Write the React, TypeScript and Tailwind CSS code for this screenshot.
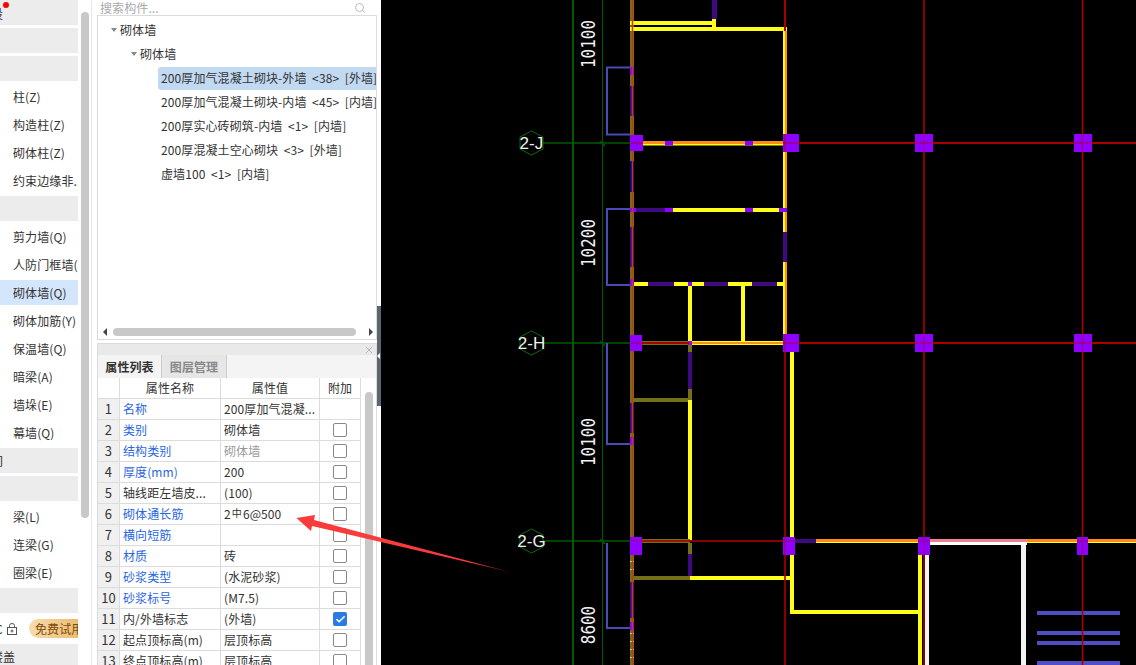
import { Check, Search, X } from 'lucide-react'

const FONT = "font-['Noto_Sans_CJK_SC','Noto_Sans',sans-serif]"

const sideRows: { label?: string; head?: boolean; active?: boolean }[] = [
  { head: true },
  { head: true },
  { label: '柱(Z)' },
  { label: '构造柱(Z)' },
  { label: '砌体柱(Z)' },
  { label: '约束边缘非...' },
  { head: true },
  { label: '剪力墙(Q)' },
  { label: '人防门框墙(' },
  { label: '砌体墙(Q)', active: true },
  { label: '砌体加筋(Y)' },
  { label: '保温墙(Q)' },
  { label: '暗梁(A)' },
  { label: '墙垛(E)' },
  { label: '幕墙(Q)' },
]

const treeRows = [
  '200厚加气混凝土砌块-外墙  <38>  [外墙]',
  '200厚加气混凝土砌块-内墙  <45>  [内墙]',
  '200厚实心砖砌筑-内墙  <1>  [内墙]',
  '200厚混凝土空心砌块  <3>  [外墙]',
  '虚墙100  <1>  [内墙]',
]

const props: { name: string; value: string; link?: boolean; muted?: boolean; box?: boolean; on?: boolean }[] = [
  { name: '名称', value: '200厚加气混凝...', link: true, box: false },
  { name: '类别', value: '砌体墙', link: true },
  { name: '结构类别', value: '砌体墙', link: true, muted: true },
  { name: '厚度(mm)', value: '200', link: true },
  { name: '轴线距左墙皮...', value: '(100)' },
  { name: '砌体通长筋', value: 'bar', link: true },
  { name: '横向短筋', value: '', link: true },
  { name: '材质', value: '砖', link: true },
  { name: '砂浆类型', value: '(水泥砂浆)', link: true },
  { name: '砂浆标号', value: '(M7.5)', link: true },
  { name: '内/外墙标志', value: '(外墙)', on: true },
  { name: '起点顶标高(m)', value: '层顶标高' },
  { name: '终点顶标高(m)', value: '层顶标高' },
]

const YELLOW = '#ffff1a'
const ORANGE = '#ff8c14'
const OLIVE = '#74701a'
const BRIGHT = '#8f00ff'
const DARK = '#3f0a80'
const RED = '#a80000'
const BLUE = '#4a4ab8'
const GREEN = '#005a00'

// x, y, w, h, fill
const rects: [number, number, number, number, string][] = [
  // left column
  [630, 0, 4, 665, OLIVE],
  // top walls
  [630, 21, 85, 4, YELLOW],
  [630, 27, 157, 4, YELLOW],
  [712, 19, 4, 10, YELLOW],
  [712, 0, 5, 19, DARK],
  // right wall upper
  [783, 27, 4, 310, YELLOW],
  [785, 31, 2, 305, ORANGE],
  [783, 232, 4, 30, DARK],
  // column openings
  [630, 67, 4, 8, BRIGHT],
  [630, 86, 4, 30, DARK],
  [630, 161, 4, 31, '#100080'],
  [630, 227, 4, 40, DARK],
  [630, 279, 4, 7, BRIGHT],
  [630, 403, 4, 30, DARK],
  [630, 437, 4, 8, BRIGHT],
  [630, 582, 4, 36, DARK],
  [630, 622, 4, 8, BRIGHT],
  // axis J wall
  [643, 141, 140, 4.5, YELLOW],
  [643, 141, 140, 3, ORANGE],
  [665, 141, 8, 4.5, BRIGHT],
  [745, 141, 8, 4.5, BRIGHT],
  // y 210 wall
  [630, 208, 156, 4, YELLOW],
  [630, 208, 6, 4, BRIGHT],
  [636, 208, 29, 4, DARK],
  [665, 208, 8, 4, BRIGHT],
  [745, 208, 8, 4, BRIGHT],
  [779, 208, 8, 4, BRIGHT],
  // y 284 wall
  [630, 282, 153, 4, YELLOW],
  [630, 282, 4, 4, BRIGHT],
  [648, 282, 26, 4, DARK],
  [688, 282, 4, 4, BRIGHT],
  [704, 282, 24, 4, DARK],
  [752, 282, 25, 4, DARK],
  // inner verticals
  [688, 286, 4, 55, YELLOW],
  [741, 286, 4, 55, YELLOW],
  // axis H wall
  [642, 341, 47, 4, OLIVE],
  [692, 341, 91, 4, YELLOW],
  [692, 342, 91, 2, ORANGE],
  [688, 341, 4, 4, BRIGHT],
  [688, 345, 4, 55, OLIVE],
  [688, 352, 4, 37, DARK],
  [634, 398, 56, 4, OLIVE],
  [688, 400, 4, 140, YELLOW],
  // axis G wall
  [642, 539, 48, 4, OLIVE],
  [688, 543, 4, 33, OLIVE],
  [688, 554, 4, 22, DARK],
  [630, 576, 60, 4, OLIVE],
  [690, 576, 102, 4, YELLOW],
  [790, 352, 4, 262, YELLOW],
  [790, 610, 130, 4, YELLOW],
  [918, 555, 4, 110, YELLOW],
  [795, 539, 21, 4, DARK],
  [816, 539, 102, 4, YELLOW],
  [816, 539, 102, 3, ORANGE],
  [1027, 539, 109, 4, YELLOW],
  [1027, 539, 109, 3, ORANGE],
  // white wall
  [930, 539, 97, 3, '#f08090'],
  [930, 542, 97, 3, '#ffffff'],
  [925, 555, 4, 110, '#f4f4f4'],
  [1021, 545, 5, 120, '#f4f4f4'],
  // blue bars
  [1037, 611, 83, 4, '#4f4fc4'],
  [1037, 631, 83, 4, '#4f4fc4'],
  [1037, 641, 83, 4, '#4f4fc4'],
  [1037, 661, 83, 4, '#4f4fc4'],
]

const squares: [number, number, number, number][] = [
  [630, 135, 13, 16],
  [783, 134, 16, 18],
  [915, 134, 18, 18],
  [1074, 134, 18, 18],
  [630, 335, 12, 16],
  [783, 334, 16, 18],
  [915, 334, 18, 18],
  [1074, 334, 18, 18],
  [630, 537, 12, 18],
  [783, 537, 12, 18],
  [918, 537, 12, 18],
  [1077, 537, 11, 18],
]

const bubbles = [
  { y: 143, label: '2-J' },
  { y: 343, label: '2-H' },
  { y: 541, label: '2-G' },
]

const dims = [
  { y: 44, label: '10100' },
  { y: 243, label: '10200' },
  { y: 442, label: '10100' },
  { y: 625, label: '8600' },
]

function Axes({ opacity = 1 }: { opacity?: number }) {
  return (
    <g stroke={RED} strokeWidth="2" strokeOpacity={opacity}>
      <path d="M631 143H643M783 143H1136" />
      <path d="M631 343H689M783 343H1136" />
      <path d="M631 541H795M918 541H930M1077 541H1088" strokeWidth="1.5" />
      <path d="M785 0V31" />
      <path d="M785 134V152" />
      <path d="M785 334V665" strokeWidth="1.5" />
      <path d="M924 0V665" strokeWidth="1.5" />
      <path d="M1082.5 0V665" strokeWidth="1.5" />
    </g>
  )
}

function Canvas() {
  return (
    <svg viewBox="381 0 755 665" className="h-full w-full block">
      <rect x="381" y="0" width="755" height="665" fill="#000" />
      {/* grid, green side */}
      <rect x="572" y="0" width="2" height="665" fill={GREEN} />
      <rect x="602" y="0" width="1" height="665" fill={GREEN} />
      {bubbles.map((b) => (
        <g key={b.y}>
          <path d={`M543 ${b.y}H630`} stroke={GREEN} strokeWidth="1.5" />
          <path d={`M600 ${b.y - 2}L605 ${b.y + 3}`} stroke={GREEN} strokeWidth="1.5" />
          <polygon
            points={`531.5,${b.y - 12} 543,${b.y - 6} 543,${b.y + 6} 531.5,${b.y + 12} 520,${b.y + 6} 520,${b.y - 6}`}
            fill="none"
            stroke="#0a6a0a"
          />
          <text
            x="531.5"
            y={b.y + 6}
            textAnchor="middle"
            fill="#f0f0f0"
            fontSize="17"
            fontFamily="'Liberation Sans', sans-serif"
          >
            {b.label}
          </text>
        </g>
      ))}
      {dims.map((d) => (
        <text
          key={d.y}
          transform={`translate(595 ${d.y}) rotate(-90)`}
          textAnchor="middle"
          fill="#f0f0f0"
          fontSize="19"
          fontFamily="'DejaVu Sans Mono', monospace"
          textLength={d.label.length * 9.6}
          lengthAdjust="spacingAndGlyphs"
        >
          {d.label}
        </text>
      ))}
      {/* brackets */}
      <g fill="none" stroke={BLUE} strokeWidth="2">
        <path d="M630 67.5H607V134.5H630" />
        <path d="M630 209H607V285H630" />
        <path d="M607 343V444H630" />
        <path d="M607 543V628H630" />
      </g>
      {rects.map(([x, y, w, h, fill], i) => (
        <rect key={i} x={x} y={y} width={w} height={h} fill={fill} />
      ))}
      {[561, 569, 633, 641, 649, 657].map((y) => (
        <rect key={y} x="630" y={y} width="4" height="1" fill="#d8d8d8" />
      ))}
      <Axes />
      <path d="M632.5 0V665" stroke="#c23a10" strokeWidth="1.5" />
      {squares.map(([x, y, w, h], i) => (
        <rect key={i} x={x} y={y} width={w} height={h} fill={BRIGHT} />
      ))}
      {/* axes show faintly through the columns */}
      <Axes opacity={0.4} />
    </svg>
  )
}

function SideRow({ label, head, active }: { label?: string; head?: boolean; active?: boolean }) {
  return (
    <div
      className={`h-[25px] shrink-0 flex items-center pl-[13px] whitespace-nowrap overflow-hidden ${
        head ? 'bg-[#ececec]' : active ? 'bg-[#d3e6fb]' : ''
      }`}
    >
      {label}
    </div>
  )
}

function Sidebar() {
  return (
    <div className="w-[78px] shrink-0 flex flex-col gap-[3px] overflow-hidden relative text-[12px] text-[#333]">
      <div className="h-[25px] shrink-0 bg-[#ececec] flex items-center overflow-hidden pt-[3px]">
        <span className="-ml-[9px]">设</span>
      </div>
      <span className="absolute left-[3px] top-[2px] w-[6px] h-[6px] rounded-full bg-[#ff0000]" />
      {sideRows.map((r, i) => (
        <SideRow key={i} {...r} />
      ))}
      <div className="h-[25px] shrink-0 bg-[#ececec] flex items-center overflow-hidden">
        <span className="-ml-[9px]">间</span>
      </div>
      <SideRow head />
      <SideRow label="梁(L)" />
      <SideRow label="连梁(G)" />
      <SideRow label="圈梁(E)" />
      <SideRow head />
      <div className="h-[25px] shrink-0 flex items-center overflow-hidden">
        <span className="-ml-[5px] w-[8px] shrink-0">C</span>
        <svg width="10" height="12" viewBox="0 0 10 12" className="ml-[4px] shrink-0" fill="none" stroke="#555" strokeWidth="1">
          <rect x="0.5" y="4.5" width="9" height="7" />
          <path d="M2.5 4.5V2.5a2.5 2 0 0 1 5 0v2" />
          <circle cx="5" cy="8" r="1" />
        </svg>
        <div className="ml-[12px] h-[19px] w-[60px] shrink-0 rounded-l-full bg-gradient-to-r from-[#f6dcae] to-[#e9b562] pl-[6px] flex items-center text-[#7c4a0c] whitespace-nowrap">
          免费试用
        </div>
      </div>
      <div className="h-[25px] shrink-0 bg-[#ececec] flex items-center overflow-hidden">
        <span className="-ml-[9px]">楼盖</span>
      </div>
    </div>
  )
}

function TreePanel() {
  return (
    <div className="h-[340px] shrink-0 flex flex-col text-[12px]">
      <div className="h-[16px] shrink-0 border-b border-[#dcdcdc] flex items-center justify-between pl-[3px] pr-[11px] text-[#aaa]">
        <span>搜索构件...</span>
        <Search size={12} className="text-[#bbb]" />
      </div>
      <div className="flex-1 min-h-0 flex flex-col border-x border-b border-[#dcdcdc]">
        <div className="flex-1 min-h-0 pt-[2px] text-[#333] overflow-hidden">
          <div className="h-6 flex items-center pl-[13px] gap-[3px]">
            <span className="w-0 h-0 border-x-[3.5px] border-x-transparent border-t-[4px] border-t-[#888]" />
            <span>砌体墙</span>
          </div>
          <div className="h-6 flex items-center pl-[33px] gap-[3px]">
            <span className="w-0 h-0 border-x-[3.5px] border-x-transparent border-t-[4px] border-t-[#888]" />
            <span>砌体墙</span>
          </div>
          {treeRows.map((t, i) => (
            <div key={t} className="h-6 flex items-center pl-[60px]">
              <div
                className={`flex-1 h-[23px] pl-[3px] flex items-center whitespace-pre overflow-hidden rounded-l-[3px] ${
                  i === 0 ? 'bg-[#c2d9f2]' : ''
                }`}
              >
                {t}
              </div>
            </div>
          ))}
        </div>
        <div className="h-[9px] shrink-0 mb-[3px] flex items-center pl-[5px] pr-[3px]">
          <span className="w-0 h-0 border-y-[4px] border-y-transparent border-r-[4px] border-r-[#444]" />
          <div className="ml-[6px] w-[243px] h-[8px] rounded-full bg-[#c8c8c8]" />
          <span className="ml-auto w-0 h-0 border-y-[4px] border-y-transparent border-l-[4px] border-l-[#444]" />
        </div>
      </div>
    </div>
  )
}

function PropPanel() {
  return (
    <div className="flex-1 min-h-0 mt-[3px] flex flex-col border-x border-[#dcdcdc] text-[12px] text-[#333] overflow-hidden">
      <div className="h-[12px] shrink-0 bg-[#e9e9e9] border-t border-[#dcdcdc] flex items-center justify-end pr-[1px]">
        <X size={12} strokeWidth={1.5} className="text-[#aaa]" />
      </div>
      <div className="h-[23px] shrink-0 bg-[#f4f4f4] flex font-bold">
        <div className="w-[64px] flex items-center justify-center border-r border-[#ccc] text-[#333]">属性列表</div>
        <div className="w-[65px] flex items-center justify-center bg-[#e6e6e6] border-r border-[#ccc] text-[#888]">图层管理</div>
      </div>
      <div className="flex-1 min-h-0 flex">
        <div className="w-[263px] shrink-0">
          <div className="grid grid-cols-[22px_101px_99px_41px] h-[21px] border-b border-[#dcdcdc]">
            <div className="border-r border-[#dcdcdc]" />
            <div className="border-r border-[#dcdcdc] flex items-center justify-center">属性名称</div>
            <div className="border-r border-[#dcdcdc] flex items-center justify-center">属性值</div>
            <div className="border-r border-[#dcdcdc] flex items-center justify-center">附加</div>
          </div>
          {props.map((p, i) => (
            <div key={p.name} className="grid grid-cols-[22px_101px_99px_41px] h-[21px] border-b border-[#dcdcdc]">
              <div className="bg-[#f0f0f0] border-r border-[#dcdcdc] flex items-center justify-center text-[13px]">{i + 1}</div>
              <div
                className={`border-r border-[#dcdcdc] pl-[3px] flex items-center whitespace-nowrap overflow-hidden ${
                  p.link ? 'text-[#2a66e0]' : ''
                }`}
              >
                {p.name}
              </div>
              <div
                className={`border-r border-[#dcdcdc] pl-[3px] flex items-center whitespace-nowrap overflow-hidden ${
                  p.muted ? 'text-[#999]' : ''
                }`}
              >
                {p.value === 'bar' ? (
                  <>
                    2<span className="text-[10px] relative -top-[2px] mx-[1px]">中</span>6@500
                  </>
                ) : (
                  p.value
                )}
              </div>
              <div className="border-r border-[#dcdcdc] flex items-center justify-center">
                {p.box !== false &&
                  (p.on ? (
                    <span className="w-[14px] h-[14px] rounded-[2px] bg-[#2b7be5] flex items-center justify-center">
                      <Check size={11} strokeWidth={3.5} className="text-white" />
                    </span>
                  ) : (
                    <span className="w-[14px] h-[14px] rounded-[2px] border border-[#888] bg-white" />
                  ))}
              </div>
            </div>
          ))}
        </div>
        <div className="ml-[4px] mt-[14px] w-[8px] h-full rounded-t-full bg-[#c8c8c8]" />
      </div>
    </div>
  )
}

export default function App() {
  return (
    <div className={`relative flex h-[665px] w-[1136px] overflow-hidden bg-white tracking-[0.1px] ${FONT}`}>
      <Sidebar />
      <div className="w-[14px] shrink-0 border-r border-[#e6e6e6] pl-[3px] pt-[12px]">
        <div className="w-[8px] h-[506px] rounded-full bg-[#c8c8c8]" />
      </div>
      <div className="w-[280px] shrink-0 ml-[5px] flex flex-col">
        <TreePanel />
        <PropPanel />
      </div>
      <div className="w-[4px] shrink-0 pt-[306px]">
        <div className="h-[100px] bg-[#5a6672] flex items-center">
          <span className="w-0 h-0 border-y-[3px] border-y-transparent border-r-[3px] border-r-white" />
        </div>
      </div>
      <div className="flex-1 min-w-0 h-full">
        <Canvas />
      </div>
      {/* arrow annotation over the table and the drawing */}
      <svg className="absolute inset-0 pointer-events-none" width="1136" height="665" viewBox="0 0 1136 665">
        <defs>
          <linearGradient id="arrowFill" gradientUnits="userSpaceOnUse" x1="296" y1="518" x2="512" y2="573">
            <stop offset="0" stopColor="#f93b3b" />
            <stop offset="0.8" stopColor="#f93b3b" />
            <stop offset="1" stopColor="#a01010" />
          </linearGradient>
        </defs>
        <polygon points="296.5,518 315,515 314,520 512,572.5 312,526 311,531" fill="url(#arrowFill)" />
      </svg>
    </div>
  )
}
